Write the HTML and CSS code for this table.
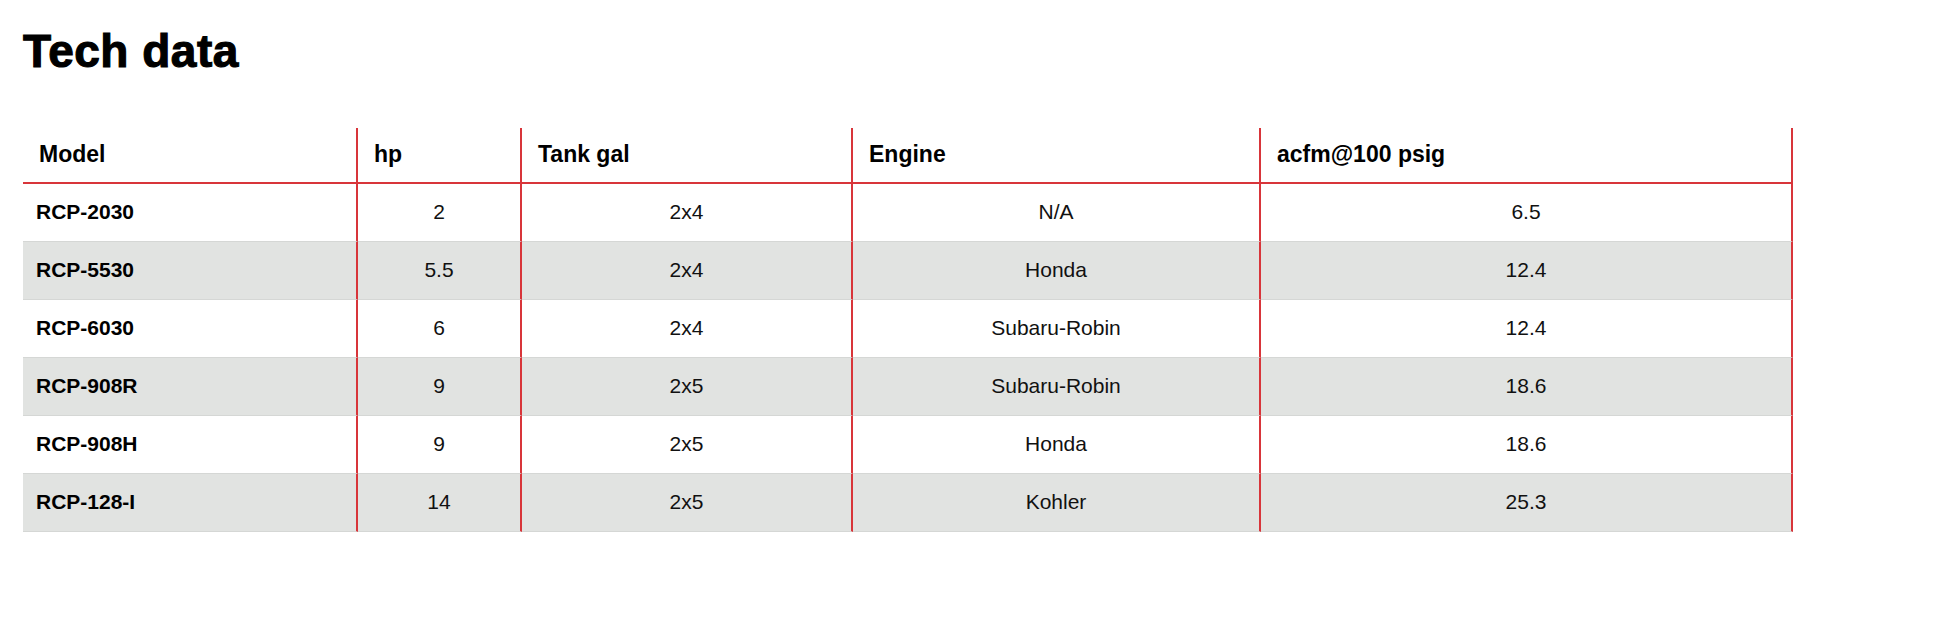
FILE: index.html
```html
<!DOCTYPE html>
<html lang="en">
<head>
<meta charset="utf-8">
<title>Tech data</title>
<link rel="stylesheet" href="styles.css">
</head>
<body>
<main class="page">
  <h1 class="title">Tech data</h1>
  <table class="spec">
    <colgroup>
      <col class="c-model">
      <col class="c-hp">
      <col class="c-tank">
      <col class="c-engine">
      <col class="c-acfm">
    </colgroup>
    <thead>
      <tr>
        <th>Model</th>
        <th>hp</th>
        <th>Tank gal</th>
        <th>Engine</th>
        <th>acfm@100 psig</th>
      </tr>
    </thead>
    <tbody>
      <tr><td class="model">RCP-2030</td><td>2</td><td>2x4</td><td>N/A</td><td>6.5</td></tr>
      <tr class="alt"><td class="model">RCP-5530</td><td>5.5</td><td>2x4</td><td>Honda</td><td>12.4</td></tr>
      <tr><td class="model">RCP-6030</td><td>6</td><td>2x4</td><td>Subaru-Robin</td><td>12.4</td></tr>
      <tr class="alt"><td class="model">RCP-908R</td><td>9</td><td>2x5</td><td>Subaru-Robin</td><td>18.6</td></tr>
      <tr><td class="model">RCP-908H</td><td>9</td><td>2x5</td><td>Honda</td><td>18.6</td></tr>
      <tr class="alt"><td class="model">RCP-128-I</td><td>14</td><td>2x5</td><td>Kohler</td><td>25.3</td></tr>
    </tbody>
  </table>
</main>
</body>
</html>
```

FILE: styles.css
```css
html, body {
  margin: 0;
  padding: 0;
  background: #ffffff;
}

body {
  font-family: "Liberation Sans", Arial, Helvetica, sans-serif;
  color: #111111;
}

.page {
  padding: 28px 23px 0 23px;
}

.title {
  margin: 0 0 54px 0;
  font-size: 46px;
  line-height: 46px;
  font-weight: 700;
  color: #000000;
  -webkit-text-stroke: 1.1px #000000;
  letter-spacing: 0.5px;
}

.spec {
  table-layout: fixed;
  width: 1770px;
  border-collapse: separate;
  border-spacing: 0;
}

.c-model { width: 335px; }
.c-hp { width: 164px; }
.c-tank { width: 331px; }
.c-engine { width: 408px; }
.c-acfm { width: 532px; }

.spec th {
  height: 56px;
  box-sizing: border-box;
  padding: 0 0 2px 16px;
  text-align: left;
  vertical-align: middle;
  font-size: 23px;
  font-weight: 700;
  color: #000000;
  border-right: 2px solid #d8353a;
  border-bottom: 2px solid #d8353a;
}

.spec td {
  height: 58px;
  box-sizing: border-box;
  padding: 0 0 2px 0;
  text-align: center;
  vertical-align: middle;
  font-size: 21px;
  color: #111111;
  border-right: 2px solid #d8353a;
  border-bottom: 1px solid #d5d7d5;
}

.spec td.model {
  text-align: left;
  padding-left: 13px;
  font-weight: 700;
  color: #000000;
}

.spec tr.alt td {
  background: #e1e3e1;
}
```
